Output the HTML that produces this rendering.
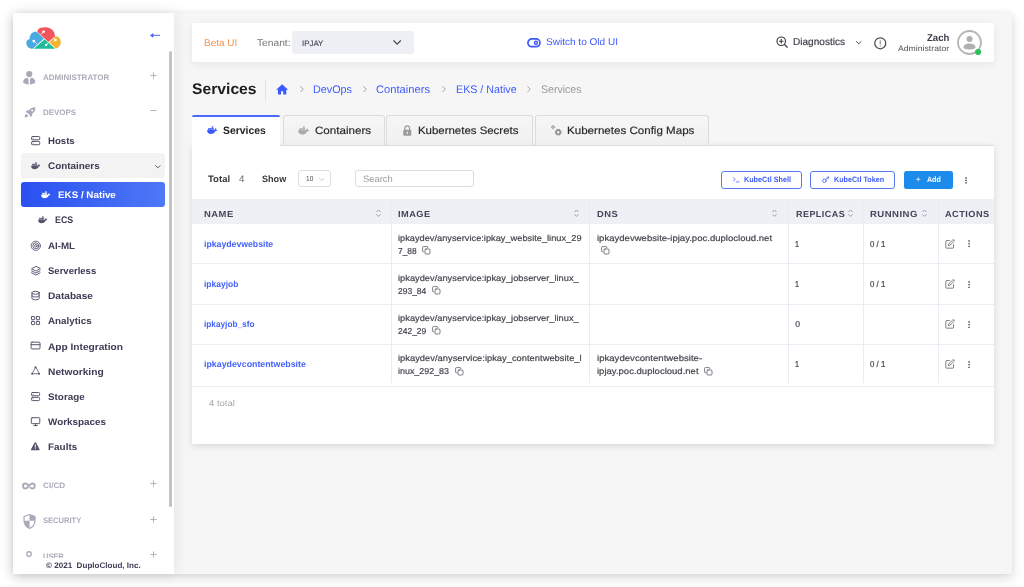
<!DOCTYPE html>
<html lang="en"><head><meta charset="utf-8"><title>Services - DuploCloud</title>
<style>
html,body{margin:0;padding:0;}
body{width:1024px;height:587px;overflow:hidden;background:#fff;font-family:"Liberation Sans",sans-serif;position:relative;}
.a{position:absolute;}
.t{text-rendering:geometricPrecision;z-index:5;position:absolute;white-space:nowrap;transform-origin:0 50%;display:block;}
#win{left:12.5px;top:12.5px;width:999.3px;height:561.4px;background:#f6f6f6;box-shadow:0 4px 11px rgba(0,0,0,.145),0 0 6px rgba(0,0,0,.05);overflow:hidden;}
#sidebg{left:12.5px;top:12.5px;width:161.5px;height:561.4px;background:#fff;box-shadow:0 0 14px rgba(0,0,0,.09);}
#scroll{left:169.1px;top:51px;width:3.3px;height:456px;background:#c3c3c3;border-radius:1.5px;}
#sidefoot{left:12.5px;top:558px;width:157px;height:15.9px;background:#fff;}
#topbg{left:192px;top:23px;width:802.3px;height:39px;background:#fff;border-radius:2px;box-shadow:0 2px 8px rgba(0,0,0,.07);}
#tenant{left:291.75px;top:31.25px;width:122px;height:22.5px;background:#eeeef5;border-radius:3px;}
.navhl{left:21.25px;width:143.6px;border-radius:3px;}
#hl1{top:153.25px;height:24.25px;background:#f3f3f3;}
#hl2{top:182px;height:25px;background:linear-gradient(90deg,#2a50f0,#4d78f6);}
#hdiv{left:264.6px;top:80px;width:1px;height:20.5px;background:#e1e1e1;}
.tab{top:115px;height:30px;box-sizing:border-box;border:1px solid #dcdcdc;border-bottom:none;background:linear-gradient(#f6f6f6,#f0f0f0);border-radius:3px 3px 0 0;}
#tab1{left:192px;width:88.3px;background:#fff;border:none;border-top:2px solid #4a69fb;height:31px;border-radius:2px 2px 0 0;}
#tab2{left:283px;width:102px;}
#tab3{left:386.25px;width:146.25px;}
#tab4{left:535px;width:173.5px;}
#panel{left:192px;top:145px;width:802px;height:298.75px;background:#fff;border-top:1px solid #dcdcdc;box-sizing:border-box;box-shadow:0 2px 7px rgba(0,0,0,.13);}
.inp{top:170px;height:17px;box-sizing:border-box;border:1px solid #dcdce5;border-radius:3px;background:#fff;}
.btn{top:170.75px;height:17.75px;box-sizing:border-box;border:1px solid #5a77f6;border-radius:3px;background:#fff;}
#add{left:903.75px;top:171px;width:48.75px;height:17.6px;background:#1b8ceb;border-radius:2.5px;}
#thead{left:192px;top:198.75px;width:802px;height:25px;background:#efeff6;}
.hl{left:192px;width:802px;height:1px;background:#ececf3;}
.vl{top:198.75px;width:1px;height:184.5px;background:#ebebf3;}
svg{position:absolute;overflow:visible;}
#texts{position:absolute;left:0;top:0;width:1024px;height:587px;will-change:transform;}

</style></head>
<body>
<div id="win" class="a"></div>
<aside>
<div id="sidebg" class="a"></div>
<div id="hl1" class="a navhl"></div>
<div id="hl2" class="a navhl"></div>
<svg class="a" style="left:26.0px;top:26.9px" width="35.2" height="22.3" viewBox="0 0 70 46.8" preserveAspectRatio="none"><path d="M24 5C29 -0.5 43 -1.500 50 4c5.500 4 8 9.500 7.500 16L44.500 31.500L22.500 10z" fill="#f2545b"/><path d="M22 10.5L35.5 24L13.5 45.5C9 46.5 2.5 43 1 36.5C-0.5 30 2.5 26.5 7.5 25C7 19 10 12 15.5 10.5c2.500-0.700 4.500-0.700 6.500 0z" fill="#4aa9e2"/><path d="M37 25.500L58 45.5H15.5z" fill="#1fbc9c"/><path d="M58.500 19.500c5-0.500 10 4 10.500 11c0.500 8-4 13.500-9.500 14.500L46.500 32.5z" fill="#f3b52f"/><g fill="#fff"><circle cx="35" cy="10" r="2.800"/><circle cx="15.500" cy="29.500" r="2.800"/><circle cx="40" cy="37.500" r="2.500"/><circle cx="58.500" cy="27.500" r="2.800"/></g><g stroke="#fff" stroke-width="1.600" fill="none"><path d="M35 10L29 16M15.500 29.500l7 6.500M40 37.500l5-5M58.500 27.500l-5-5"/></g></svg>
<svg class="a" style="left:150.4px;top:32.5px" width="10" height="4.8" viewBox="0 0 10 4.800" ><path d="M0 2.400L3.300 0v4.800z" fill="#3d5afe"/><rect x="3" y="1.750" width="7" height="1.300" fill="#3d5afe" opacity="0.72"/></svg>
<svg class="a" style="left:23.1px;top:71px" width="12.5" height="13.7" viewBox="0 0 25 27.400" ><g fill="#a9a9b9"><circle cx="12.500" cy="6.200" r="6.200"/><path d="M0.300 22.500c0-5.500 4-8.800 8.200-8.800l2.700 3.300v10.400l-4.500-1.500c-3.700-0.800-6.400-1.800-6.400-3.400zM24.700 22.500c0-5.500-4-8.800-8.200-8.800l-2.700 3.300v10.400l4.500-1.500c3.700-0.800 6.400-1.800 6.400-3.400z"/></g></svg>
<svg class="a" style="left:23.9px;top:107.4px" width="11.6" height="10.8" viewBox="0 0 23.200 21.600" ><g fill="#a9a9b9"><path d="M22.800 0.400c-5.500-0.300-10 1.800-12.600 6.200l-4.500 0.300l-2.900 3.700l3.800 0.700l5.300 5.300l0.700 3.800l3.700-2.900l0.300-4.500c4.400-2.600 6.500-7.100 6.200-12.600z"/><path d="M5.200 14.200l3.600 3.600c-1 1.800-4.200 2.700-7.300 2.500c-0.200-3.100 0.700-5.100 3.700-6.100zM2.900 18.800l-2.700 2.600" /></g><circle cx="16.300" cy="6.800" r="1.900" fill="#fff"/></svg>
<svg class="a" style="left:30.75px;top:135.97px" width="9.25" height="9.25" viewBox="1.3 1.3 21.4 21.4" ><g fill="none" stroke="#56546c" stroke-width="2.3" stroke-linecap="round" stroke-linejoin="round"><rect x="2.5" y="2.5" width="19" height="7.600" rx="2"/><rect x="2.5" y="13.900" width="19" height="7.600" rx="2"/><path d="M6 6.5h.01M6 17.5h.01"/></g></svg>
<svg class="a" style="left:30.5px;top:161.78px" width="9.5" height="7.25" viewBox="0 0 21.5 16.4" ><g fill="#56546c"><path d="M0.2 8.2h15.3c0.3-1.900 1.300-3.200 2.900-3.900c0.600 1 0.700 2.100 0.300 3.200c0.900-0.100 1.800 0.100 2.600 0.500c-0.600 1.500-2 2.300-3.900 2.300c-1.600 3.900-4.900 5.900-9.300 5.900c-5.200 0-7.900-2.900-7.900-8z"/><rect x="2.2" y="4.1" width="11.8" height="4.4" opacity="0.82"/><rect x="9.4" y="0.4" width="3.3" height="4" opacity="0.82"/></g></svg>
<svg class="a" style="left:41.25px;top:191.08px" width="9.5" height="7.25" viewBox="0 0 21.5 16.4" ><g fill="#fff"><path d="M0.2 8.2h15.3c0.3-1.900 1.300-3.200 2.900-3.900c0.600 1 0.700 2.100 0.300 3.200c0.900-0.100 1.800 0.100 2.600 0.500c-0.600 1.500-2 2.300-3.900 2.300c-1.600 3.900-4.900 5.900-9.300 5.900c-5.200 0-7.900-2.900-7.900-8z"/><rect x="2.2" y="4.1" width="11.8" height="4.4" opacity="0.82"/><rect x="9.4" y="0.4" width="3.3" height="4" opacity="0.82"/></g></svg>
<svg class="a" style="left:38px;top:216.08px" width="9.5" height="7.25" viewBox="0 0 21.5 16.4" ><g fill="#56546c"><path d="M0.2 8.2h15.3c0.3-1.900 1.300-3.200 2.900-3.900c0.600 1 0.700 2.100 0.300 3.200c0.900-0.100 1.800 0.100 2.600 0.500c-0.600 1.500-2 2.300-3.900 2.300c-1.600 3.900-4.900 5.900-9.300 5.900c-5.200 0-7.900-2.900-7.900-8z"/><rect x="2.2" y="4.1" width="11.8" height="4.4" opacity="0.82"/><rect x="9.4" y="0.4" width="3.3" height="4" opacity="0.82"/></g></svg>
<svg class="a" style="left:30.6px;top:240.6px" width="9.6" height="9.6" viewBox="1.3 1.3 21.4 21.4" ><g fill="none" stroke="#56546c" stroke-width="1.9" stroke-linecap="round" stroke-linejoin="round"><circle cx="12" cy="12" r="10.300"/><circle cx="12" cy="12" r="6.600"/><circle cx="12" cy="12" r="2.900"/></g></svg>
<svg class="a" style="left:30.6px;top:265.6px" width="9.6" height="9.6" viewBox="1.3 1.3 21.4 21.4" ><g fill="none" stroke="#56546c" stroke-width="2.1" stroke-linecap="round" stroke-linejoin="round"><path d="M12 2.5L2.5 7.5L12 12.5L21.5 7.5z"/><path d="M2.5 12L12 17L21.5 12"/><path d="M2.5 16.5L12 21.5L21.5 16.5"/></g></svg>
<svg class="a" style="left:30.9px;top:290.75px" width="9.1" height="9.1" viewBox="1.3 1.3 21.4 21.4" ><g fill="none" stroke="#56546c" stroke-width="2.3" stroke-linecap="round" stroke-linejoin="round"><ellipse cx="12" cy="5.5" rx="8.5" ry="3.5"/><path d="M3.5 5.5v13c0 1.9 3.8 3.5 8.5 3.5s8.5-1.6 8.5-3.5v-13"/><path d="M3.5 12c0 1.9 3.8 3.5 8.5 3.5s8.5-1.6 8.5-3.5"/></g></svg>
<svg class="a" style="left:30.9px;top:316.05px" width="9.1" height="9.1" viewBox="1.3 1.3 21.4 21.4" ><g fill="none" stroke="#56546c" stroke-width="2.3" stroke-linecap="round" stroke-linejoin="round"><rect x="2.5" y="2.5" width="7.5" height="7.5" rx="1.2"/><rect x="14" y="2.5" width="7.5" height="7.5" rx="1.2"/><rect x="2.5" y="14" width="7.5" height="7.5" rx="1.2"/><rect x="14" y="14" width="7.5" height="7.5" rx="1.2"/></g></svg>
<svg class="a" style="left:31.1px;top:341.35px" width="9.1" height="9.1" viewBox="1.3 1.3 21.4 21.4" ><g fill="none" stroke="#56546c" stroke-width="2.3" stroke-linecap="round" stroke-linejoin="round"><rect x="1.5" y="4" width="21" height="16" rx="2.2"/><path d="M1.5 10h21"/></g></svg>
<svg class="a" style="left:30.9px;top:366.25px" width="9.1" height="9.1" viewBox="1.3 1.3 21.4 21.4" ><g fill="none" stroke="#56546c" stroke-width="2.3" stroke-linecap="round" stroke-linejoin="round"><path d="M12 4.5L4 19.5h16z" stroke-width="1.900"/><circle cx="12" cy="4.2" r="2.3" fill="#56546c" stroke="none"/><circle cx="3.8" cy="19.6" r="2.3" fill="#56546c" stroke="none"/><circle cx="20.2" cy="19.6" r="2.3" fill="#56546c" stroke="none"/></g></svg>
<svg class="a" style="left:30.9px;top:391.65px" width="9.1" height="9.1" viewBox="1.3 1.3 21.4 21.4" ><g fill="none" stroke="#56546c" stroke-width="2.3" stroke-linecap="round" stroke-linejoin="round"><rect x="2.5" y="2.5" width="19" height="7.600" rx="2"/><rect x="2.5" y="13.900" width="19" height="7.600" rx="2"/><path d="M6 6.5h.01M6 17.5h.01"/></g></svg>
<svg class="a" style="left:30.9px;top:416.75px" width="9.1" height="9.1" viewBox="1.3 1.3 21.4 21.4" ><g fill="none" stroke="#56546c" stroke-width="2.3" stroke-linecap="round" stroke-linejoin="round"><rect x="2" y="3" width="20" height="14" rx="2"/><path d="M8 21.5h8M12 17v4.5"/></g></svg>
<svg class="a" style="left:31.3px;top:441.8px" width="8.6" height="8.4" viewBox="0 0 17.200 16.800" ><path d="M8.600 0.500c0.700 0 1.200 0.400 1.600 1l6.700 12.400c0.700 1.300 0 2.600-1.500 2.600H1.800c-1.500 0-2.200-1.300-1.500-2.600L7 1.500c0.400-0.600 0.900-1 1.600-1z" fill="#56546c"/><path d="M8.600 5.500v5.300M8.600 13.300v0.100" stroke="#fff" stroke-width="1.900" stroke-linecap="round"/></svg>
<svg class="a" style="left:154.6px;top:164.5px" width="5.6" height="3.8" viewBox="0 0 11.200 7.600" ><path d="M1.200 1.400l4.400 4.400l4.400-4.400" fill="none" stroke="#55536a" stroke-width="2" stroke-linecap="round" stroke-linejoin="round"/></svg>
<svg class="a" style="left:150.3px;top:72.1px" width="7" height="7" viewBox="0 0 7 7" ><path d="M0.300 3.500h6.400M3.500 0.300v6.400" stroke="#a8a8b4" stroke-width="0.850" fill="none"/></svg>
<svg class="a" style="left:150.3px;top:106.8px" width="7" height="7" viewBox="0 0 7 7" ><path d="M0.300 3.500h6.400" stroke="#a8a8b4" stroke-width="0.850" fill="none"/></svg>
<svg class="a" style="left:150.3px;top:480.25px" width="7" height="7" viewBox="0 0 7 7" ><path d="M0.300 3.500h6.400M3.500 0.300v6.400" stroke="#a8a8b4" stroke-width="0.850" fill="none"/></svg>
<svg class="a" style="left:150.3px;top:515.5px" width="7" height="7" viewBox="0 0 7 7" ><path d="M0.300 3.500h6.400M3.500 0.300v6.400" stroke="#a8a8b4" stroke-width="0.850" fill="none"/></svg>
<svg class="a" style="left:150.3px;top:550.5px" width="7" height="7" viewBox="0 0 7 7" ><path d="M0.300 3.500h6.400M3.500 0.300v6.400" stroke="#a8a8b4" stroke-width="0.850" fill="none"/></svg>
<svg class="a" style="left:22.4px;top:482.3px" width="13.8" height="8" viewBox="-1.4 0.6 30.3 15.3" ><path d="M13.750 8.250c-2.500-3.500-4.500-5.500-7.500-5.500a5.500 5.500 0 0 0 0 11c3 0 5-2 7.500-5.500c2.500-3.500 4.500-5.500 7.500-5.500a5.500 5.500 0 0 1 0 11c-1.800 0-3.200-0.700-4.600-2" fill="none" stroke="#a9a9b9" stroke-width="3.900" stroke-linecap="round"/></svg>
<svg class="a" style="left:22.9px;top:513.8px" width="13.1" height="14.9" viewBox="0 0 25 30" preserveAspectRatio="none"><path d="M12.500 1.200L2 5.200v8.500c0 7 4.300 12.500 10.500 15.300c6.200-2.800 10.500-8.300 10.500-15.300V5.200z" fill="none" stroke="#a9a9b9" stroke-width="2.200" stroke-linejoin="round"/><path d="M12.500 1.200L23 5.200v8.600H12.500zM12.500 13.800H2c0 7 4.300 12.400 10.500 15.200z" fill="#a9a9b9"/></svg>
<svg class="a" style="left:26.25px;top:550.5px" width="6" height="6" viewBox="0 0 12 12" ><circle cx="6" cy="6" r="4.500" fill="none" stroke="#a9a9b9" stroke-width="2.600"/></svg>
<div id="sidefoot" class="a"></div>
<div id="scroll" class="a"></div>
</aside>
<header>
<div id="topbg" class="a"></div>
<div id="tenant" class="a"></div>
<svg class="a" style="left:393px;top:40px" width="8.25" height="5" viewBox="0 0 16.500 10" ><path d="M1.500 1.500l6.750 6.750L15 1.500" fill="none" stroke="#444" stroke-width="2.300" stroke-linecap="round" stroke-linejoin="round"/></svg>
<svg class="a" style="left:527.3px;top:38.1px" width="13.9" height="9.6" viewBox="0 0 27.800 19.200" ><rect x="1.800" y="1.800" width="24.200" height="15.600" rx="7.800" fill="none" stroke="#3d5afe" stroke-width="3.400"/><circle cx="17.900" cy="9.600" r="3" fill="none" stroke="#3d5afe" stroke-width="2.800"/></svg>
<svg class="a" style="left:775.5px;top:36px" width="12" height="12" viewBox="0 0 24 24" ><g fill="none" stroke="#3c3c48" stroke-width="2.300" stroke-linecap="round"><circle cx="10.500" cy="10.500" r="8.500"/><path d="M17 17l5.500 5.500M10.500 6.800v7.400M6.800 10.500h7.400"/></g></svg>
<svg class="a" style="left:855.5px;top:40.9px" width="5.5" height="3.4" viewBox="0 0 11 6.800" ><path d="M1 1.200l4.500 4.300l4.500-4.300" fill="none" stroke="#4a4a55" stroke-width="2" stroke-linecap="round" stroke-linejoin="round"/></svg>
<svg class="a" style="left:873.5px;top:36.5px" width="12.5" height="12.5" viewBox="0 0 25 25" ><g fill="none" stroke="#4a4a56" stroke-width="2.500" stroke-linecap="round"><circle cx="12.500" cy="12.500" r="11"/><path d="M12.500 7.500v6.500M12.500 17.600v0.200" stroke-width="2.200" stroke="#8a8a94"/></g></svg>
<svg class="a" style="left:956.5px;top:29.7px" width="25" height="25" viewBox="0 0 50 50" ><circle cx="25" cy="25" r="23" fill="#fff" stroke="#b5b5b5" stroke-width="3.600"/><circle cx="25" cy="18" r="6" fill="#b0b0b0"/><path d="M13 34.500c0-5 5.500-7.500 12-7.500s12 2.500 12 7.500c0 3-5.500 4.500-12 4.500s-12-1.500-12-4.500z" fill="#b0b0b0"/></svg>
<svg class="a" style="left:975.1px;top:48.7px" width="6.2" height="6.2" viewBox="0 0 12.400 12.400" ><circle cx="6.200" cy="6.200" r="6.100" fill="#2dbe5a"/></svg>
</header>
<main>
<div id="hdiv" class="a"></div>
<svg class="a" style="left:275.75px;top:84px" width="12.25" height="10.5" viewBox="0 0 24.500 21" ><path d="M12.250 0.500L0.300 11.300h3.600V21h6.200v-6.600h4.300V21h6.200v-9.700h3.600z" fill="#3d5afe"/></svg>
<svg class="a" style="left:299.75px;top:86.4px" width="4" height="6.4" viewBox="0 0 8 12.800" ><path d="M1.500 1.300l5 5.100l-5 5.100" fill="none" stroke="#a0a0a0" stroke-width="1.900" stroke-linecap="round" stroke-linejoin="round"/></svg>
<svg class="a" style="left:363px;top:86.4px" width="4" height="6.4" viewBox="0 0 8 12.800" ><path d="M1.500 1.300l5 5.100l-5 5.100" fill="none" stroke="#a0a0a0" stroke-width="1.900" stroke-linecap="round" stroke-linejoin="round"/></svg>
<svg class="a" style="left:442px;top:86.4px" width="4" height="6.4" viewBox="0 0 8 12.800" ><path d="M1.500 1.300l5 5.100l-5 5.100" fill="none" stroke="#a0a0a0" stroke-width="1.900" stroke-linecap="round" stroke-linejoin="round"/></svg>
<svg class="a" style="left:527px;top:86.4px" width="4" height="6.4" viewBox="0 0 8 12.800" ><path d="M1.500 1.300l5 5.100l-5 5.100" fill="none" stroke="#a0a0a0" stroke-width="1.900" stroke-linecap="round" stroke-linejoin="round"/></svg>
<div id="panel" class="a"></div>
<div id="tab1" class="a tab"></div>
<div id="tab2" class="a tab"></div>
<div id="tab3" class="a tab"></div>
<div id="tab4" class="a tab"></div>
<svg class="a" style="left:206.7px;top:126.4px" width="10.5" height="8.01" viewBox="0 0 21.5 16.4" ><g fill="#3d5afe"><path d="M0.2 8.2h15.3c0.3-1.900 1.300-3.200 2.900-3.900c0.600 1 0.700 2.100 0.300 3.200c0.900-0.100 1.800 0.100 2.600 0.500c-0.600 1.500-2 2.300-3.900 2.300c-1.600 3.900-4.900 5.900-9.300 5.900c-5.200 0-7.900-2.900-7.900-8z"/><rect x="2.2" y="4.1" width="11.8" height="4.4" opacity="0.82"/><rect x="9.4" y="0.4" width="3.3" height="4" opacity="0.82"/></g></svg>
<svg class="a" style="left:298px;top:126.09px" width="11.3" height="8.62" viewBox="0 0 21.5 16.4" ><g fill="#a9a9a9"><path d="M0.2 8.2h15.3c0.3-1.900 1.300-3.200 2.900-3.900c0.600 1 0.700 2.100 0.300 3.200c0.900-0.100 1.800 0.100 2.600 0.500c-0.600 1.500-2 2.300-3.900 2.300c-1.600 3.900-4.900 5.900-9.300 5.900c-5.200 0-7.900-2.900-7.900-8z"/><rect x="2.2" y="4.1" width="11.8" height="4.4" opacity="0.82"/><rect x="9.4" y="0.4" width="3.3" height="4" opacity="0.82"/></g></svg>
<svg class="a" style="left:402.5px;top:124.5px" width="8.5" height="11" viewBox="0 0 17 22" ><path d="M3.800 10V6.500a4.700 4.700 0 0 1 9.400 0V10" fill="none" stroke="#9b9b9b" stroke-width="2.400"/><rect x="0.500" y="9.500" width="16" height="12" rx="2" fill="#9b9b9b"/><rect x="7.300" y="13.200" width="2.400" height="4.600" rx="1" fill="#f4f4f4"/></svg>
<svg class="a" style="left:550.5px;top:124.6px" width="10.8" height="10.8" viewBox="0 0 21.600 21.600" ><g fill="none" stroke="#8f8f8f"><circle cx="14.500" cy="14.500" r="3.900" stroke-width="2.900"/><circle cx="14.500" cy="14.500" r="5.600" stroke-width="2.600" stroke-dasharray="2.600 1.800"/><circle cx="4.200" cy="4.200" r="2.300" stroke-width="1.800"/><circle cx="4.200" cy="4.200" r="3.300" stroke-width="1.400" stroke-dasharray="1.500 1.100"/></g></svg>
<div class="a inp" style="left:298.25px;width:33px;"></div>
<div class="a inp" style="left:355px;width:119.25px;"></div>
<div class="a btn" style="left:720.75px;width:81px;"></div>
<div class="a btn" style="left:809.75px;width:85.5px;"></div>
<div id="add" class="a"></div>
<div id="thead" class="a"></div>
<div class="a hl" style="top:263.25px"></div>
<div class="a hl" style="top:304px"></div>
<div class="a hl" style="top:344.1px"></div>
<div class="a hl" style="top:385.6px;height:1.4px;background:#ececf2"></div>
<div class="a vl" style="left:390.7px"></div>
<div class="a vl" style="left:589px"></div>
<div class="a vl" style="left:787.6px"></div>
<div class="a vl" style="left:862.6px"></div>
<div class="a vl" style="left:937.7px"></div>
<svg class="a" style="left:318.7px;top:177.9px" width="5.3" height="3" viewBox="0 0 10.600 6" ><path d="M1 1l4.300 4l4.300-4" fill="none" stroke="#aaa" stroke-width="1.300" stroke-linecap="round" stroke-linejoin="round"/></svg>
<svg class="a" style="left:732.5px;top:177px" width="6.4" height="5.4" viewBox="0 0 12.800 10.800" ><path d="M1 1.500l3.600 3.300L1 8.100M6.500 9.800h5.500" fill="none" stroke="#3d5afe" stroke-width="1.500" stroke-linecap="round" stroke-linejoin="round"/></svg>
<svg class="a" style="left:821.75px;top:176px" width="7.2" height="7.2" viewBox="0 0 14.400 14.400" ><g fill="none" stroke="#3d5afe" stroke-width="1.600" stroke-linecap="round"><circle cx="4.800" cy="9.600" r="3.600"/><path d="M7.500 7L13 1.500M10.700 3.800l2 2M12.400 2.100l1.300 1.300"/></g></svg>
<svg class="a" style="left:916.3px;top:177.4px" width="4.6" height="4.6" viewBox="0 0 9.200 9.200" ><path d="M4.600 0.500v8.200M0.500 4.600h8.200" stroke="#fff" stroke-width="1.400" fill="none"/></svg>
<svg class="a" style="left:964.55px;top:177px" width="2.1" height="6.800000000000011" viewBox="0 0 2.1 6.800000000000011" ><g fill="#55555f"><circle cx="1.05" cy="0.95" r="0.85"/><circle cx="1.05" cy="3.4" r="0.85"/><circle cx="1.05" cy="5.85" r="0.85"/></g></svg>
<svg class="a" style="left:375.6px;top:208.8px" width="5" height="8.4" viewBox="0 0 10 16.800" ><path d="M1.500 5.500L5 2l3.500 3.500M1.500 11.300l3.500 3.500l3.500-3.500" fill="none" stroke="#8d8d99" stroke-width="1.700" stroke-linecap="round" stroke-linejoin="round"/></svg>
<svg class="a" style="left:573.9px;top:208.8px" width="5" height="8.4" viewBox="0 0 10 16.800" ><path d="M1.500 5.500L5 2l3.500 3.500M1.500 11.300l3.500 3.500l3.500-3.500" fill="none" stroke="#8d8d99" stroke-width="1.700" stroke-linecap="round" stroke-linejoin="round"/></svg>
<svg class="a" style="left:772.1px;top:208.8px" width="5" height="8.4" viewBox="0 0 10 16.800" ><path d="M1.500 5.500L5 2l3.500 3.500M1.500 11.300l3.500 3.500l3.500-3.500" fill="none" stroke="#8d8d99" stroke-width="1.700" stroke-linecap="round" stroke-linejoin="round"/></svg>
<svg class="a" style="left:848.1px;top:208.8px" width="5" height="8.4" viewBox="0 0 10 16.800" ><path d="M1.500 5.500L5 2l3.500 3.500M1.500 11.300l3.500 3.500l3.500-3.500" fill="none" stroke="#8d8d99" stroke-width="1.700" stroke-linecap="round" stroke-linejoin="round"/></svg>
<svg class="a" style="left:922.4px;top:208.8px" width="5" height="8.4" viewBox="0 0 10 16.800" ><path d="M1.500 5.500L5 2l3.500 3.500M1.500 11.300l3.500 3.500l3.500-3.500" fill="none" stroke="#8d8d99" stroke-width="1.700" stroke-linecap="round" stroke-linejoin="round"/></svg>
<svg class="a" style="left:422.2px;top:246px" width="8.6" height="8.6" viewBox="0 0 21.500 21.500" ><g fill="none" stroke="#55555f" stroke-width="1.900" stroke-linecap="round" stroke-linejoin="round"><rect x="7.500" y="7.500" width="12.500" height="12.500" rx="2.500"/><path d="M4.200 14.500H3.500a2 2 0 0 1-2-2v-9a2 2 0 0 1 2-2h9a2 2 0 0 1 2 2v0.700"/></g></svg>
<svg class="a" style="left:432.2px;top:286px" width="8.6" height="8.6" viewBox="0 0 21.500 21.500" ><g fill="none" stroke="#55555f" stroke-width="1.900" stroke-linecap="round" stroke-linejoin="round"><rect x="7.500" y="7.500" width="12.500" height="12.500" rx="2.500"/><path d="M4.200 14.500H3.500a2 2 0 0 1-2-2v-9a2 2 0 0 1 2-2h9a2 2 0 0 1 2 2v0.700"/></g></svg>
<svg class="a" style="left:432.2px;top:326.3px" width="8.6" height="8.6" viewBox="0 0 21.500 21.500" ><g fill="none" stroke="#55555f" stroke-width="1.900" stroke-linecap="round" stroke-linejoin="round"><rect x="7.500" y="7.500" width="12.500" height="12.500" rx="2.500"/><path d="M4.200 14.500H3.500a2 2 0 0 1-2-2v-9a2 2 0 0 1 2-2h9a2 2 0 0 1 2 2v0.700"/></g></svg>
<svg class="a" style="left:454.7px;top:366.6px" width="8.6" height="8.6" viewBox="0 0 21.500 21.500" ><g fill="none" stroke="#55555f" stroke-width="1.900" stroke-linecap="round" stroke-linejoin="round"><rect x="7.500" y="7.500" width="12.500" height="12.500" rx="2.500"/><path d="M4.200 14.500H3.500a2 2 0 0 1-2-2v-9a2 2 0 0 1 2-2h9a2 2 0 0 1 2 2v0.700"/></g></svg>
<svg class="a" style="left:601.45px;top:246px" width="8.6" height="8.6" viewBox="0 0 21.500 21.500" ><g fill="none" stroke="#55555f" stroke-width="1.900" stroke-linecap="round" stroke-linejoin="round"><rect x="7.500" y="7.500" width="12.500" height="12.500" rx="2.500"/><path d="M4.200 14.500H3.500a2 2 0 0 1-2-2v-9a2 2 0 0 1 2-2h9a2 2 0 0 1 2 2v0.700"/></g></svg>
<svg class="a" style="left:704.45px;top:366.6px" width="8.6" height="8.6" viewBox="0 0 21.500 21.500" ><g fill="none" stroke="#55555f" stroke-width="1.900" stroke-linecap="round" stroke-linejoin="round"><rect x="7.500" y="7.500" width="12.500" height="12.500" rx="2.500"/><path d="M4.200 14.500H3.500a2 2 0 0 1-2-2v-9a2 2 0 0 1 2-2h9a2 2 0 0 1 2 2v0.700"/></g></svg>
<svg class="a" style="left:945px;top:238.70000000000002px" width="10" height="10" viewBox="0 0 24 24" ><g fill="none" stroke="#50505c" stroke-width="1.800" stroke-linecap="round" stroke-linejoin="round"><path d="M10.500 3.500H4a2 2 0 0 0-2 2v14.500a2 2 0 0 0 2 2h14.500a2 2 0 0 0 2-2v-6.500"/><path d="M18.700 2.200a2.100 2.100 0 0 1 3 3L12.200 14.800l-4 1l1-4z"/></g></svg>
<svg class="a" style="left:967.55px;top:240.4px" width="2.1" height="7.199999999999989" viewBox="0 0 2.1 7.199999999999989" ><g fill="#55555f"><circle cx="1.05" cy="0.95" r="0.85"/><circle cx="1.05" cy="3.6" r="0.85"/><circle cx="1.05" cy="6.25" r="0.85"/></g></svg>
<svg class="a" style="left:945px;top:279.1px" width="10" height="10" viewBox="0 0 24 24" ><g fill="none" stroke="#50505c" stroke-width="1.800" stroke-linecap="round" stroke-linejoin="round"><path d="M10.500 3.500H4a2 2 0 0 0-2 2v14.500a2 2 0 0 0 2 2h14.500a2 2 0 0 0 2-2v-6.500"/><path d="M18.700 2.200a2.100 2.100 0 0 1 3 3L12.200 14.800l-4 1l1-4z"/></g></svg>
<svg class="a" style="left:967.55px;top:280.8px" width="2.1" height="7.199999999999989" viewBox="0 0 2.1 7.199999999999989" ><g fill="#55555f"><circle cx="1.05" cy="0.95" r="0.85"/><circle cx="1.05" cy="3.6" r="0.85"/><circle cx="1.05" cy="6.25" r="0.85"/></g></svg>
<svg class="a" style="left:945px;top:319.1px" width="10" height="10" viewBox="0 0 24 24" ><g fill="none" stroke="#50505c" stroke-width="1.800" stroke-linecap="round" stroke-linejoin="round"><path d="M10.500 3.500H4a2 2 0 0 0-2 2v14.500a2 2 0 0 0 2 2h14.500a2 2 0 0 0 2-2v-6.500"/><path d="M18.700 2.200a2.100 2.100 0 0 1 3 3L12.200 14.800l-4 1l1-4z"/></g></svg>
<svg class="a" style="left:967.55px;top:320.8px" width="2.1" height="7.199999999999989" viewBox="0 0 2.1 7.199999999999989" ><g fill="#55555f"><circle cx="1.05" cy="0.95" r="0.85"/><circle cx="1.05" cy="3.6" r="0.85"/><circle cx="1.05" cy="6.25" r="0.85"/></g></svg>
<svg class="a" style="left:945px;top:359.3px" width="10" height="10" viewBox="0 0 24 24" ><g fill="none" stroke="#50505c" stroke-width="1.800" stroke-linecap="round" stroke-linejoin="round"><path d="M10.500 3.500H4a2 2 0 0 0-2 2v14.500a2 2 0 0 0 2 2h14.500a2 2 0 0 0 2-2v-6.500"/><path d="M18.700 2.200a2.100 2.100 0 0 1 3 3L12.200 14.800l-4 1l1-4z"/></g></svg>
<svg class="a" style="left:967.55px;top:361.0px" width="2.1" height="7.199999999999989" viewBox="0 0 2.1 7.199999999999989" ><g fill="#55555f"><circle cx="1.05" cy="0.95" r="0.85"/><circle cx="1.05" cy="3.6" r="0.85"/><circle cx="1.05" cy="6.25" r="0.85"/></g></svg>
</main>

<div id="texts">
<span class="t" style="left:43.2px;top:73.1px;font-size:7.9px;line-height:10.27px;font-weight:700;color:#acacba;transform:scaleX(1.0128);">ADMINISTRATOR</span>
<span class="t" style="left:43.4px;top:108.1px;font-size:7.9px;line-height:10.27px;font-weight:700;color:#acacba;transform:scaleX(1.0054);">DEVOPS</span>
<span class="t" style="left:47.85px;top:136.1px;font-size:9.5px;line-height:12.35px;font-weight:700;color:#3e3c54;transform:scaleX(1.0111);">Hosts</span>
<span class="t" style="left:47.85px;top:161.1px;font-size:9.5px;line-height:12.35px;font-weight:700;color:#3e3c54;transform:scaleX(1.0418);">Containers</span>
<span class="t" style="left:55.35px;top:215.1px;font-size:9.5px;line-height:12.35px;font-weight:700;color:#3e3c54;transform:scaleX(0.9324);">ECS</span>
<span class="t" style="left:47.85px;top:241.1px;font-size:9.5px;line-height:12.35px;font-weight:700;color:#3e3c54;transform:scaleX(1.0216);">AI-ML</span>
<span class="t" style="left:47.85px;top:266.1px;font-size:9.5px;line-height:12.35px;font-weight:700;color:#3e3c54;transform:scaleX(1.0024);">Serverless</span>
<span class="t" style="left:47.85px;top:291.1px;font-size:9.5px;line-height:12.35px;font-weight:700;color:#3e3c54;transform:scaleX(1.0641);">Database</span>
<span class="t" style="left:47.85px;top:316.1px;font-size:9.5px;line-height:12.35px;font-weight:700;color:#3e3c54;transform:scaleX(1.0344);">Analytics</span>
<span class="t" style="left:47.85px;top:342.1px;font-size:9.5px;line-height:12.35px;font-weight:700;color:#3e3c54;transform:scaleX(1.0677);">App Integration</span>
<span class="t" style="left:47.85px;top:367.1px;font-size:9.5px;line-height:12.35px;font-weight:700;color:#3e3c54;transform:scaleX(1.0766);">Networking</span>
<span class="t" style="left:47.85px;top:392.1px;font-size:9.5px;line-height:12.35px;font-weight:700;color:#3e3c54;transform:scaleX(1.0374);">Storage</span>
<span class="t" style="left:47.85px;top:417.1px;font-size:9.5px;line-height:12.35px;font-weight:700;color:#3e3c54;transform:scaleX(1.0385);">Workspaces</span>
<span class="t" style="left:47.85px;top:442.1px;font-size:9.5px;line-height:12.35px;font-weight:700;color:#3e3c54;transform:scaleX(1.0436);">Faults</span>
<span class="t" style="left:58.25px;top:190.1px;font-size:9.5px;line-height:12.35px;font-weight:700;color:#fff;transform:scaleX(1.0326);">EKS / Native</span>
<span class="t" style="left:43.0px;top:481.1px;font-size:7.9px;line-height:10.27px;font-weight:700;color:#acacba;transform:scaleX(1.0330);">CI/CD</span>
<span class="t" style="left:43.0px;top:516.1px;font-size:7.9px;line-height:10.27px;font-weight:700;color:#acacba;transform:scaleX(0.9598);">SECURITY</span>
<span class="t" style="left:43.0px;top:552.1px;font-size:7.9px;line-height:10.27px;font-weight:700;color:#acacba;transform:scaleX(0.9449);clip-path:inset(0 0 4.37px 0);">USER</span>
<span class="t" style="left:45.5px;top:561.1px;font-size:8.0px;line-height:10.4px;font-weight:700;color:#3e3c54;transform:scaleX(1.0087);white-space:pre;">© 2021  DuploCloud, Inc.</span>
<span class="t" style="left:204.4px;top:38.1px;font-size:9.8px;line-height:12.74px;font-weight:400;color:#f5934e;transform:scaleX(1.0172);">Beta UI</span>
<span class="t" style="left:256.5px;top:38.1px;font-size:9.8px;line-height:12.74px;font-weight:400;color:#777;transform:scaleX(1.0441);">Tenant:</span>
<span class="t" style="left:302.0px;top:39.1px;font-size:8px;line-height:10.4px;font-weight:400;color:#4c4c58;transform:scaleX(0.9865);-webkit-text-stroke:0.15px #4c4c58;">IPJAY</span>
<span class="t" style="left:545.75px;top:37.1px;font-size:9.8px;line-height:12.74px;font-weight:400;color:#3d5afe;transform:scaleX(1.0250);">Switch to Old UI</span>
<span class="t" style="left:793.0px;top:36.1px;font-size:10px;line-height:13.0px;font-weight:400;color:#42424e;transform:scaleX(1.0060);-webkit-text-stroke:0.2px #42424e;">Diagnostics</span>
<span class="t" style="left:926.75px;top:32.1px;font-size:10px;line-height:13.0px;font-weight:700;color:#3c3c48;transform:scaleX(0.9578);">Zach</span>
<span class="t" style="left:897.5px;top:44.1px;font-size:7.9px;line-height:10.27px;font-weight:400;color:#555;transform:scaleX(1.0992);">Administrator</span>
<span class="t" style="left:191.75px;top:80.1px;font-size:15.4px;line-height:20.02px;font-weight:700;color:#1c1c1c;transform:scaleX(1.0196);">Services</span>
<span class="t" style="left:313.0px;top:83.1px;font-size:11px;line-height:14.3px;font-weight:400;color:#3d5afe;transform:scaleX(0.9817);">DevOps</span>
<span class="t" style="left:376.25px;top:83.1px;font-size:11px;line-height:14.3px;font-weight:400;color:#3d5afe;transform:scaleX(1.0150);">Containers</span>
<span class="t" style="left:455.75px;top:83.1px;font-size:11px;line-height:14.3px;font-weight:400;color:#3d5afe;transform:scaleX(0.9720);">EKS / Native</span>
<span class="t" style="left:540.5px;top:83.1px;font-size:11px;line-height:14.3px;font-weight:400;color:#9a9a9a;transform:scaleX(0.9607);">Services</span>
<span class="t" style="left:223.0px;top:125.1px;font-size:10.7px;line-height:13.91px;font-weight:700;color:#222;transform:scaleX(0.9709);">Services</span>
<span class="t" style="left:314.5px;top:125.1px;font-size:10.7px;line-height:13.91px;font-weight:400;color:#2a2a2a;transform:scaleX(1.0849);-webkit-text-stroke:0.18px #2a2a2a;">Containers</span>
<span class="t" style="left:418.0px;top:125.1px;font-size:10.7px;line-height:13.91px;font-weight:400;color:#2a2a2a;transform:scaleX(1.0693);-webkit-text-stroke:0.18px #2a2a2a;">Kubernetes Secrets</span>
<span class="t" style="left:566.75px;top:125.1px;font-size:10.7px;line-height:13.91px;font-weight:400;color:#2a2a2a;transform:scaleX(1.0828);-webkit-text-stroke:0.18px #2a2a2a;">Kubernetes Config Maps</span>
<span class="t" style="left:207.5px;top:173.1px;font-size:9.3px;line-height:12.09px;font-weight:700;color:#3a3a3a;transform:scaleX(1.0270);">Total</span>
<span class="t" style="left:238.75px;top:173.1px;font-size:9.3px;line-height:12.09px;font-weight:400;color:#666;transform:scaleX(1.0500);">4</span>
<span class="t" style="left:261.75px;top:173.1px;font-size:9.3px;line-height:12.09px;font-weight:700;color:#3a3a3a;transform:scaleX(0.9781);">Show</span>
<span class="t" style="left:306.0px;top:174.1px;font-size:7.3px;line-height:9.49px;font-weight:400;color:#555;transform:scaleX(0.8935);">10</span>
<span class="t" style="left:363.0px;top:173.1px;font-size:9.3px;line-height:12.09px;font-weight:400;color:#9a9a9a;transform:scaleX(1.0073);">Search</span>
<span class="t" style="left:743.75px;top:175.1px;font-size:7.8px;line-height:10.14px;font-weight:700;color:#3d5afe;transform:scaleX(0.9254);">KubeCtl Shell</span>
<span class="t" style="left:833.5px;top:175.1px;font-size:7.8px;line-height:10.14px;font-weight:700;color:#3d5afe;transform:scaleX(0.9191);">KubeCtl Token</span>
<span class="t" style="left:927.25px;top:175.1px;font-size:7.8px;line-height:10.14px;font-weight:700;color:#fff;transform:scaleX(0.9095);">Add</span>
<span class="t" style="left:203.75px;top:209.1px;font-size:8.9px;line-height:11.57px;font-weight:700;color:#45435a;transform:scaleX(1.0613);letter-spacing:0.45px;">NAME</span>
<span class="t" style="left:398.25px;top:209.1px;font-size:8.9px;line-height:11.57px;font-weight:700;color:#45435a;transform:scaleX(1.0413);letter-spacing:0.45px;">IMAGE</span>
<span class="t" style="left:596.75px;top:209.1px;font-size:8.9px;line-height:11.57px;font-weight:700;color:#45435a;transform:scaleX(1.0523);letter-spacing:0.45px;">DNS</span>
<span class="t" style="left:795.5px;top:209.1px;font-size:8.9px;line-height:11.57px;font-weight:700;color:#45435a;transform:scaleX(1.0134);letter-spacing:0.45px;">REPLICAS</span>
<span class="t" style="left:870.0px;top:209.1px;font-size:8.9px;line-height:11.57px;font-weight:700;color:#45435a;transform:scaleX(1.0744);letter-spacing:0.45px;">RUNNING</span>
<span class="t" style="left:944.75px;top:209.1px;font-size:8.9px;line-height:11.57px;font-weight:700;color:#45435a;transform:scaleX(1.0359);letter-spacing:0.45px;">ACTIONS</span>
<span class="t" style="left:203.75px;top:239.1px;font-size:8.8px;line-height:11.44px;font-weight:700;color:#4462fd;transform:scaleX(0.9889);">ipkaydevwebsite</span>
<span class="t" style="left:203.75px;top:279.1px;font-size:8.8px;line-height:11.44px;font-weight:700;color:#4462fd;transform:scaleX(0.9639);">ipkayjob</span>
<span class="t" style="left:203.75px;top:319.1px;font-size:8.8px;line-height:11.44px;font-weight:700;color:#4462fd;transform:scaleX(0.9375);">ipkayjob_sfo</span>
<span class="t" style="left:203.75px;top:359.1px;font-size:8.8px;line-height:11.44px;font-weight:700;color:#4462fd;transform:scaleX(1.0020);">ipkaydevcontentwebsite</span>
<span class="t" style="left:398.25px;top:233.1px;font-size:8.6px;line-height:11.18px;font-weight:400;color:#46464f;transform:scaleX(1.0761);-webkit-text-stroke:0.2px #46464f;">ipkaydev/anyservice:ipkay_website_linux_29</span>
<span class="t" style="left:398.25px;top:246.1px;font-size:8.6px;line-height:11.18px;font-weight:400;color:#46464f;transform:scaleX(0.9696);-webkit-text-stroke:0.2px #46464f;">7_88</span>
<span class="t" style="left:398.25px;top:273.1px;font-size:8.6px;line-height:11.18px;font-weight:400;color:#46464f;transform:scaleX(1.0812);-webkit-text-stroke:0.2px #46464f;">ipkaydev/anyservice:ipkay_jobserver_linux_</span>
<span class="t" style="left:398.25px;top:286.1px;font-size:8.6px;line-height:11.18px;font-weight:400;color:#46464f;transform:scaleX(0.9863);-webkit-text-stroke:0.2px #46464f;">293_84</span>
<span class="t" style="left:398.25px;top:313.1px;font-size:8.6px;line-height:11.18px;font-weight:400;color:#46464f;transform:scaleX(1.0812);-webkit-text-stroke:0.2px #46464f;">ipkaydev/anyservice:ipkay_jobserver_linux_</span>
<span class="t" style="left:398.25px;top:326.1px;font-size:8.6px;line-height:11.18px;font-weight:400;color:#46464f;transform:scaleX(0.9863);-webkit-text-stroke:0.2px #46464f;">242_29</span>
<span class="t" style="left:398.25px;top:353.1px;font-size:8.6px;line-height:11.18px;font-weight:400;color:#46464f;transform:scaleX(1.0891);-webkit-text-stroke:0.2px #46464f;">ipkaydev/anyservice:ipkay_contentwebsite_l</span>
<span class="t" style="left:398.25px;top:366.1px;font-size:8.6px;line-height:11.18px;font-weight:400;color:#46464f;transform:scaleX(1.0366);-webkit-text-stroke:0.2px #46464f;">inux_292_83</span>
<span class="t" style="left:596.75px;top:233.1px;font-size:8.6px;line-height:11.18px;font-weight:400;color:#46464f;transform:scaleX(1.1116);-webkit-text-stroke:0.2px #46464f;">ipkaydevwebsite-ipjay.poc.duplocloud.net</span>
<span class="t" style="left:596.75px;top:353.1px;font-size:8.6px;line-height:11.18px;font-weight:400;color:#46464f;transform:scaleX(1.1168);-webkit-text-stroke:0.2px #46464f;">ipkaydevcontentwebsite-</span>
<span class="t" style="left:596.75px;top:366.1px;font-size:8.6px;line-height:11.18px;font-weight:400;color:#46464f;transform:scaleX(1.1092);-webkit-text-stroke:0.2px #46464f;">ipjay.poc.duplocloud.net</span>
<span class="t" style="left:795.3px;top:239.1px;font-size:8.6px;line-height:11.18px;font-weight:400;color:#46464f;transform:scaleX(0.8400);-webkit-text-stroke:0.2px #46464f;">1</span>
<span class="t" style="left:795.3px;top:279.1px;font-size:8.6px;line-height:11.18px;font-weight:400;color:#46464f;transform:scaleX(0.8400);-webkit-text-stroke:0.2px #46464f;">1</span>
<span class="t" style="left:795.3px;top:319.1px;font-size:8.6px;line-height:11.18px;font-weight:400;color:#46464f;transform:scaleX(1.0000);-webkit-text-stroke:0.2px #46464f;">0</span>
<span class="t" style="left:795.3px;top:359.1px;font-size:8.6px;line-height:11.18px;font-weight:400;color:#46464f;transform:scaleX(0.8400);-webkit-text-stroke:0.2px #46464f;">1</span>
<span class="t" style="left:870.0px;top:239.1px;font-size:8.6px;line-height:11.18px;font-weight:400;color:#46464f;transform:scaleX(0.9149);-webkit-text-stroke:0.2px #46464f;">0 / 1</span>
<span class="t" style="left:870.0px;top:279.1px;font-size:8.6px;line-height:11.18px;font-weight:400;color:#46464f;transform:scaleX(0.9149);-webkit-text-stroke:0.2px #46464f;">0 / 1</span>
<span class="t" style="left:870.0px;top:359.1px;font-size:8.6px;line-height:11.18px;font-weight:400;color:#46464f;transform:scaleX(0.9149);-webkit-text-stroke:0.2px #46464f;">0 / 1</span>
<span class="t" style="left:209.25px;top:398.1px;font-size:8.6px;line-height:11.18px;font-weight:400;color:#a8a8a8;transform:scaleX(1.1063);">4 total</span>
</div>
</body></html>
